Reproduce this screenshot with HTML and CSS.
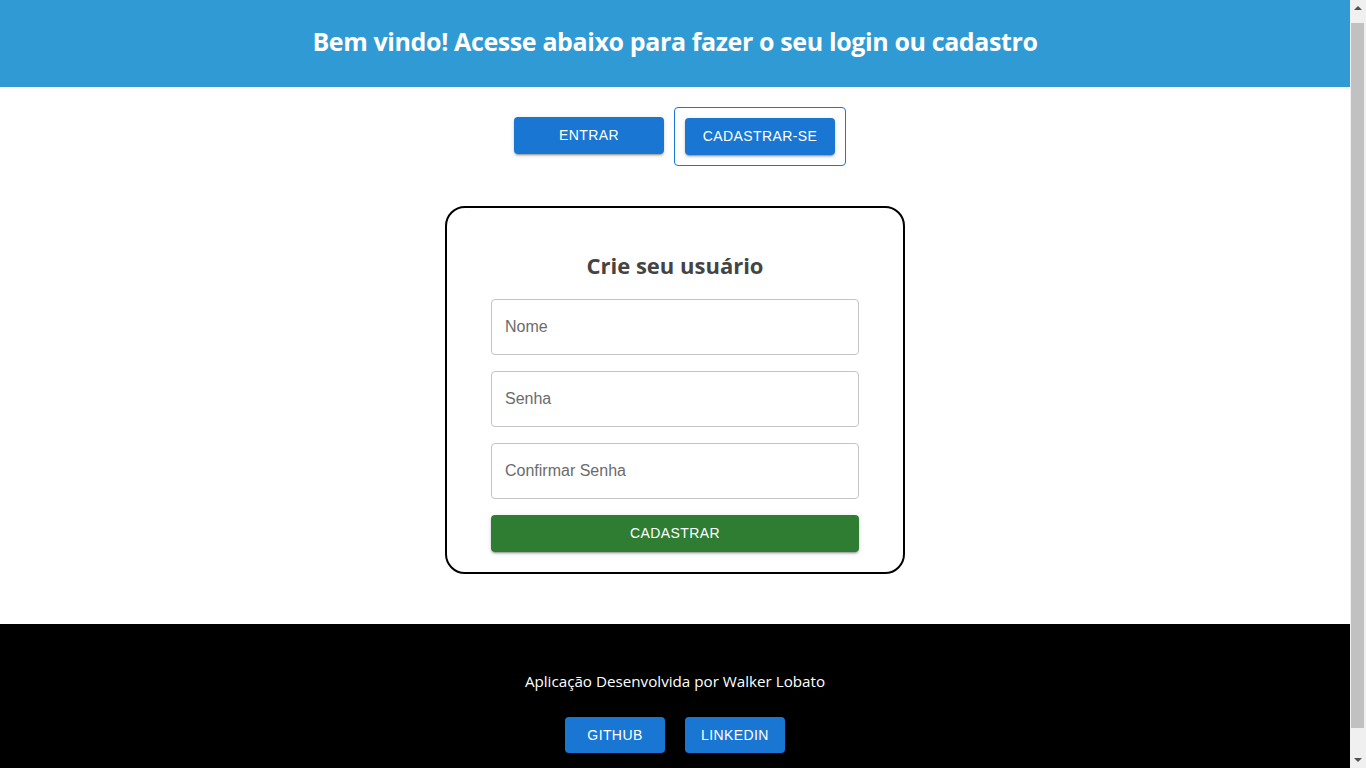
FILE: index.html
```html
<!DOCTYPE html>
<html lang="pt-BR">
<head>
<meta charset="utf-8">
<title>Cadastro</title>
<link rel="stylesheet" href="styles.css">
</head>
<body>
<header class="top">
  <h1 class="top-title">Bem vindo! Acesse abaixo para fazer o seu login ou cadastro</h1>
</header>
<main class="main">
  <div class="tabs">
    <button class="btn btn-blue btn-tab btn-entrar">ENTRAR</button>
    <div class="tab-active">
      <button class="btn btn-blue btn-tab">CADASTRAR-SE</button>
    </div>
  </div>
  <form class="card">
    <h2 class="card-title">Crie seu usuário</h2>
    <input class="field" type="text" placeholder="Nome">
    <input class="field" type="password" placeholder="Senha">
    <input class="field" type="password" placeholder="Confirmar Senha">
    <button type="button" class="btn btn-green btn-submit">CADASTRAR</button>
  </form>
</main>
<footer class="foot">
  <p class="foot-text">Aplicação Desenvolvida por Walker Lobato</p>
  <div class="foot-links">
    <button class="btn btn-blue btn-foot">GITHUB</button>
    <button class="btn btn-blue btn-foot">LINKEDIN</button>
  </div>
</footer>
</body>
</html>
```
FILE: styles.css
```css
* { box-sizing: border-box; }
html, body { margin: 0; padding: 0; }
html {
  background-color: #f0f0f0;
  background-image: linear-gradient(#c1c1c1, #c1c1c1);
  background-size: 13px 705px;
  background-position: right 2px top 23px;
  background-repeat: no-repeat;
  background-attachment: fixed;
}
body {
  font-family: "Open Sans", "Noto Sans", sans-serif;
  background: #fff;
  margin-right: 16px;
}
/* classic scrollbar arrows */
body::before,
body::after {
  content: "";
  position: fixed;
  right: 4px;
  width: 0;
  height: 0;
  border-left: 4px solid transparent;
  border-right: 4px solid transparent;
}
body::before {
  top: 6px;
  border-bottom: 4px solid #505050;
}
body::after {
  bottom: 6px;
  border-top: 4px solid #505050;
}
.top {
  background: #2f9ad4;
  height: 87px;
  display: flex;
  align-items: center;
  justify-content: center;
  padding-bottom: 6px;
}
.top-title {
  margin: 0;
  color: #fff;
  font-size: 25px;
  font-weight: 700;
  letter-spacing: -0.38px;
}
.main {
  display: flex;
  flex-direction: column;
  align-items: center;
  padding: 20px 0 50px;
}
.tabs {
  display: flex;
  align-items: center;
  gap: 10px;
  margin-bottom: 40px;
  padding-left: 10px;
}
.tab-active {
  border: 1px solid #1976d2;
  border-radius: 4px;
  padding: 10px;
}
.btn {
  font-family: "Liberation Sans", Arial, sans-serif;
  font-size: 14px;
  font-weight: 500;
  letter-spacing: 0.4px;
  color: #fff;
  border: none;
  border-radius: 4px;
  cursor: pointer;
  text-transform: uppercase;
}
.btn-blue { background: #1976d2; }
.btn-green { background: #2e7d32; }
.btn-tab {
  width: 150px;
  height: 37px;
  padding: 0 16px 2px;
  box-shadow: 0 3px 1px -2px rgba(0,0,0,.2), 0 2px 2px 0 rgba(0,0,0,.14), 0 1px 5px 0 rgba(0,0,0,.12);
}
.btn-entrar { margin-top: -2px; }
.card {
  width: 460px;
  border: 2px solid #000;
  border-radius: 20px;
  padding: 42px 44px 20px;
  display: flex;
  flex-direction: column;
  gap: 16px;
}
.card-title {
  margin: 0 0 3px;
  text-align: center;
  font-size: 22px;
  font-weight: 700;
  color: #444;
  line-height: 30px;
}
.field {
  height: 56px;
  width: 100%;
  border: 1px solid #c4c4c4;
  border-radius: 4px;
  padding: 0 13px;
  font-family: "Liberation Sans", Arial, sans-serif;
  font-size: 16px;
  color: #222;
  outline: none;
}
.field::placeholder { color: #6b6b6b; }
.btn-submit {
  height: 37px;
  width: 100%;
  padding-bottom: 2px;
  box-shadow: 0 3px 1px -2px rgba(0,0,0,.2), 0 2px 2px 0 rgba(0,0,0,.14), 0 1px 5px 0 rgba(0,0,0,.12);
}
.foot {
  background: #000;
  color: #fff;
  height: 153px;
  display: flex;
  flex-direction: column;
  align-items: center;
  padding-top: 46px;
}
.foot-text {
  margin: 0 0 25px;
  font-size: 15.2px;
  line-height: 22px;
}
.foot-links {
  display: flex;
  gap: 20px;
}
.btn-foot {
  width: 100px;
  height: 36px;
}
```
